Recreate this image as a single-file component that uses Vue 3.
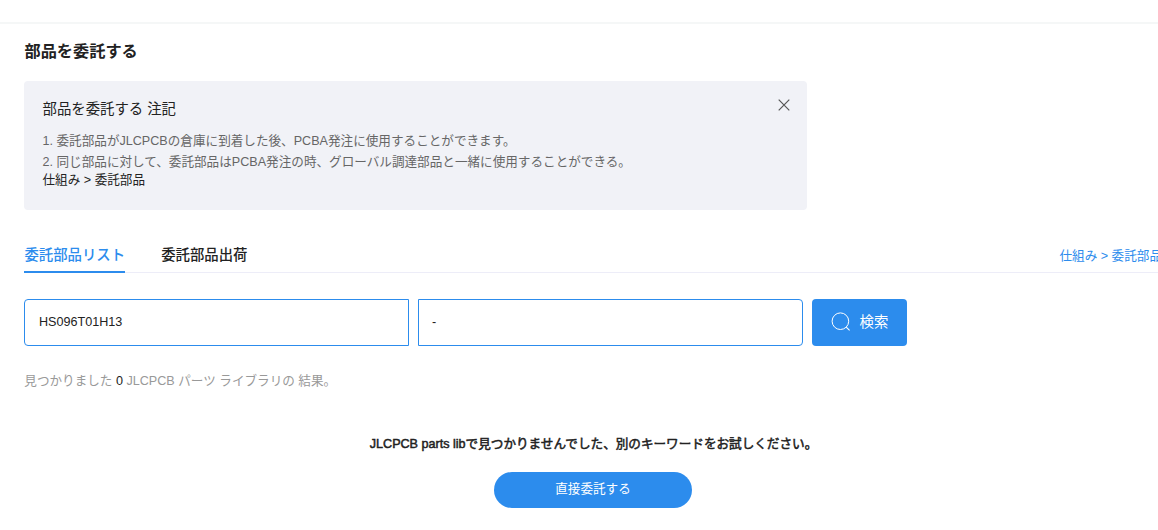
<template>
  <div class="page">
    <header class="top-bar"></header>
    <main class="content">
      <h1 class="title">部品を委託する</h1>

      <section v-if="showNote" class="note">
        <div class="note-head">
          <h2 class="note-title">部品を委託する 注記</h2>
          <button type="button" class="note-close" aria-label="close" @click="showNote = false">
            <svg width="12" height="12" viewBox="0 0 12 12">
              <path d="M0.7 0.7L11.3 11.3M11.3 0.7L0.7 11.3" fill="none" stroke="#555" stroke-width="1.2" />
            </svg>
          </button>
        </div>
        <p v-for="(line, index) in notes" :key="index" class="note-line">{{ index + 1 }}. {{ line }}</p>
        <a class="note-link">仕組み &gt; 委託部品</a>
      </section>

      <nav class="tabs">
        <a
          v-for="tab in tabs"
          :key="tab"
          class="tab"
          :class="{ active: tab === activeTab }"
          @click="activeTab = tab"
        >{{ tab }}</a>
        <a class="tabs-link">仕組み &gt; 委託部品</a>
      </nav>

      <form class="search" @submit.prevent>
        <input v-model="keyword" class="search-input first" />
        <input v-model="brand" class="search-input last" />
        <button type="submit" class="search-btn">
          <svg class="search-icon" width="20" height="20" viewBox="0 0 20 20">
            <circle cx="9.4" cy="9.2" r="8.3" fill="none" stroke="#fff" stroke-width="1" />
            <path d="M15.2 15.1L18.6 18.3" fill="none" stroke="#fff" stroke-width="1.1" />
          </svg>
          <span class="search-label">検索</span>
        </button>
      </form>

      <p class="count">見つかりました <span class="count-num">{{ total }}</span> JLCPCB パーツ ライブラリの 結果。</p>

      <div class="empty">
        <p class="empty-text">JLCPCB parts libで見つかりませんでした、別のキーワードをお試しください。</p>
        <button type="button" class="consign-btn">直接委託する</button>
      </div>
    </main>
  </div>
</template>

<script setup>
import { ref } from 'vue'

const showNote = ref(true)
const notes = [
  '委託部品がJLCPCBの倉庫に到着した後、PCBA発注に使用することができます。',
  '同じ部品に対して、委託部品はPCBA発注の時、グローバル調達部品と一緒に使用することができる。'
]

const tabs = ['委託部品リスト', '委託部品出荷']
const activeTab = ref(tabs[0])

const keyword = ref('HS096T01H13')
const brand = ref('-')
const total = ref(0)
</script>

<style>
body {
  overflow: hidden;
  background: #fff;
}
</style>

<style scoped>
.page {
  height: 530px;
  overflow: hidden;
  font-family: "Liberation Sans", "Noto Sans CJK JP", sans-serif;
  font-size: 12.6px;
  color: #222;
}

h1,
h2,
p {
  margin: 0;
}

button,
input {
  font-family: inherit;
  box-sizing: border-box;
}

.top-bar {
  height: 22px;
  border-bottom: 2px solid #f5f7f7;
}

.content {
  width: 1138px;
  padding: 15px 0 0 24px;
}

.title {
  height: 24px;
  padding-left: 0.5px;
  line-height: 24px;
  font-size: 16.2px;
  font-weight: 700;
}

.note {
  width: 783px;
  height: 129px;
  margin-top: 18px;
  padding: 16px 17px 0 18.5px;
  box-sizing: border-box;
  border-radius: 4px;
  background: #f1f2f7;
}

.note-head {
  display: flex;
  justify-content: space-between;
  height: 34px;
}

.note-title {
  line-height: 24px;
  font-size: 14.4px;
  font-weight: 400;
}

.note-close {
  width: 12px;
  height: 12px;
  margin-top: 2px;
  padding: 0;
  border: none;
  background: none;
  line-height: 0;
  cursor: pointer;
}

.note-line {
  height: 21px;
  line-height: 21px;
  color: #666;
}

.note-link {
  display: block;
  line-height: 14px;
}

.tabs {
  display: flex;
  height: 36px;
  margin-top: 26px;
  border-bottom: 1px solid #ededf8;
}

.tab {
  height: 35px;
  margin-right: 36px;
  border-bottom: 2px solid transparent;
  line-height: 38px;
  font-size: 14.4px;
  font-weight: 500;
  cursor: pointer;
}

.tab.active {
  border-bottom-color: #2c8ced;
  color: #2c8ced;
  text-indent: 0.4px;
}

.tabs-link {
  flex: none;
  margin-left: auto;
  line-height: 41px;
  color: #2c8ced;
}

.search {
  display: flex;
  gap: 9px;
  margin-top: 26px;
}

.search-input {
  width: 385px;
  height: 47px;
  padding: 0 14px 1px;
  border: 1px solid #2c8ced;
  outline: none;
  background: #fff;
  font-size: 12.6px;
  color: #222;
}

.search-input.first {
  border-radius: 4px 0 0 4px;
}

.search-input.last {
  padding-left: 13px;
  border-radius: 0 4px 4px 0;
}

.search-btn {
  display: flex;
  align-items: center;
  width: 95px;
  height: 47px;
  padding: 0 0 1px 19px;
  border: none;
  border-radius: 4px;
  background: #2c8ced;
  font-size: 14.4px;
  color: #fff;
  cursor: pointer;
}

.search-icon {
  margin-right: 8.5px;
}

.search-label {
  padding-bottom: 3px;
}

.count {
  margin-top: 25px;
  padding-left: 0.3px;
  line-height: 20px;
  color: #999;
}

.count-num {
  color: #222;
}

.empty {
  display: flex;
  flex-direction: column;
  align-items: center;
  margin-top: 43px;
}

.empty-text {
  padding-left: 1px;
  line-height: 20px;
  font-weight: 400;
  -webkit-text-stroke: 0.5px #222;
}

.consign-btn {
  width: 198px;
  height: 36px;
  margin-top: 18px;
  padding: 0 0 5px;
  border: none;
  border-radius: 18px;
  background: #2c8ced;
  font-size: 12.6px;
  color: #fff;
  cursor: pointer;
}
</style>
